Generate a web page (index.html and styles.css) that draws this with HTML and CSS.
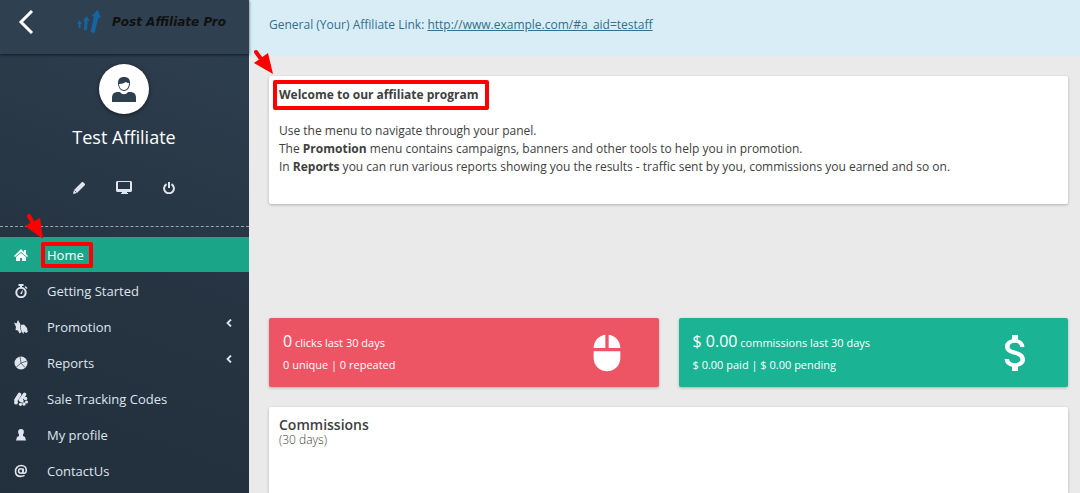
FILE: index.html
```html
<!DOCTYPE html>
<html lang="en">
<head>
    <meta charset="UTF-8">
    <meta name="viewport" content="width=device-width, initial-scale=1.0">
    <title>Post Affiliate Pro</title>
    <link rel="stylesheet" href="styles.css">
</head>
<body>
    <aside class="sidebar">
        <header class="brand">
            <button type="button" class="back" aria-label="Hide menu">
                <svg width="16" height="24" viewBox="0 0 16 24"><path d="M14 1 3 12l11 11" fill="none" stroke="#fff" stroke-width="3"/></svg>
            </button>
            <a href="#" class="logo">
                <svg width="24" height="24" viewBox="0 0 24 24" fill="#1565a5">
                    <path d="M2.500 10l2.500 4H3.500v4h-2v-4H0z"/>
                    <path d="M9.500 6l3 5h-2l-.5 9H7l.5-9H6z"/>
                    <path d="M20.500 0l3.500 8-2.500-.5L17.500 23l-4-1L17 6.500l-2.500-.5z"/>
                </svg>
                <span>Post Affiliate Pro</span>
            </a>
        </header>

        <div class="user">
            <div class="avatar">
                <svg width="24" height="26" viewBox="0 0 24 26">
                    <path d="M0 26v-4c0-4 2-6 6-6h2c2 3 6 3 8 0h2c4 0 6 2 6 6v4z" fill="#2f4050"/>
                    <path d="M12 1c-4 0-6 2-6 6 0 5 3 8 6 8s6-3 6-8c0-4-2-6-6-6z" fill="#2f4050"/>
                    <path d="M7 8c3 0 5-1 7-2 1 1 2 1 3 1 0 4-2 7-5 7s-5-3-5-6z" fill="#fff"/>
                </svg>
            </div>
            <div class="user-name">Test Affiliate</div>
            <div class="user-actions">
                <button type="button" aria-label="Edit profile">
                    <svg width="12" height="12" viewBox="0 0 12 12"><path d="M0 12l1-4 8-8h1l2 2v1l-8 8z"/><path d="M1.500 8.500l2 2" stroke="#2f4050" stroke-width="0.8"/></svg>
                </button>
                <button type="button" aria-label="Desktop view">
                    <svg width="16" height="13" viewBox="0 0 16 13"><path fill-rule="evenodd" d="M1 0h14l1 1v9l-1 1h-4v1h1v1H5v-1h1v-1H1l-1-1V1zM2 1v7h12V1z"/></svg>
                </button>
                <button type="button" aria-label="Log out">
                    <svg width="12" height="12" viewBox="0 0 12 12"><path d="M3.500 2.200a4.900 4.900 0 1 0 5 0" fill="none" stroke="#dfe4ed" stroke-width="2"/><path d="M5 0h2v6H5z"/></svg>
                </button>
            </div>
        </div>

        <nav>
            <ul class="menu">
                <li>
                    <a href="#" class="active">
                        <svg viewBox="0 0 14 14"><path d="M7 1l3 3V2h2v4l2 2-1 1-6-5-6 5-1-1z"/><path d="M7 5l5 4v4H8v-3H6v3H2V9z"/></svg>
                        <span class="marked">Home
                            <svg class="arrow arrow-home" width="18" height="25" viewBox="0 0 18 25"><path d="M4 2l4 7" stroke="#f00" stroke-width="4" stroke-linecap="round"/><path d="M0 12l15-8 3 21z" fill="#f00"/></svg>
                        </span>
                    </a>
                </li>
                <li>
                    <a href="#">
                        <svg viewBox="0 0 14 14"><circle cx="7" cy="8.500" r="4.700" fill="none" stroke="#dfe4ed" stroke-width="2"/><path d="M4.500 0h5v2H8v2H6V2H4.500zM11.500 2l2 2-1 1-2-2zM6 9.500l3-4L8 10z"/></svg>
                        <span>Getting Started</span>
                    </a>
                </li>
                <li>
                    <a href="#">
                        <svg viewBox="0 0 14 14"><path d="M0 2.500l2.500 1L4 0l2.500 4.500L6 8l1.500 4-2 1.500-1.500-3-2.500-.5L2 7z"/><path d="M7 5l3-.5 3 3.500.8 4-1.800 1-2-1.500L9.500 14 8 12 6.500 8z"/></svg>
                        <span>Promotion</span>
                        <svg class="chevron" viewBox="0 0 6 8"><path d="M5 0.500 1.500 4 5 7.500" fill="none" stroke="#dfe4ed" stroke-width="1.800"/></svg>
                    </a>
                </li>
                <li>
                    <a href="#">
                        <svg viewBox="0 0 14 14"><circle cx="7" cy="7" r="6.500"/><path d="M6 0.500 7 7l6-2M7 7l-5 4.500M7 7l4 4.500" fill="none" stroke="#2f4050" stroke-width="0.700"/></svg>
                        <span>Reports</span>
                        <svg class="chevron" viewBox="0 0 6 8"><path d="M5 0.500 1.500 4 5 7.500" fill="none" stroke="#dfe4ed" stroke-width="1.800"/></svg>
                    </a>
                </li>
                <li>
                    <a href="#">
                        <svg viewBox="0 0 14 14"><path d="M5.500 2.500 2 8M10.500 2.500 6.500 8" stroke="#dfe4ed" stroke-width="3.600" stroke-linecap="round"/><circle cx="2" cy="10.500" r="2"/><circle cx="11.500" cy="6.500" r="1.800"/><circle cx="8" cy="9" r="1.700"/><circle cx="12.500" cy="10" r="1.500"/><circle cx="6.500" cy="12.300" r="1.600"/><circle cx="10" cy="12" r="1.700"/></svg>
                        <span>Sale Tracking Codes</span>
                    </a>
                </li>
                <li>
                    <a href="#">
                        <svg viewBox="0 0 14 14"><circle cx="7" cy="4" r="2.900"/><path d="M5 6h4v2l2 1 1 3.500H2L3 9l2-1z"/></svg>
                        <span>My profile</span>
                    </a>
                </li>
                <li>
                    <a href="#">
                        <svg viewBox="0 0 14 14" class="line"><circle cx="6.800" cy="7" r="2.200"/><path d="M9.300 4.500 8.800 8.500c0 1.500 3.500 1 3.500-2 0-3-2-5-5-5C4 1.500 1.500 4 1.500 7.200c0 3 2 5.200 5.200 5.200 1.500 0 2.800-.4 3.800-1"/></svg>
                        <span>ContactUs</span>
                    </a>
                </li>
            </ul>
        </nav>
    </aside>

    <main class="content">
        <div class="notice">General (Your) Affiliate Link: <a href="#">http://www.example.com/#a_aid=testaff</a></div>

        <div class="panels">
            <section class="card welcome">
                <h1><span class="marked">Welcome to our affiliate program
                    <svg class="arrow arrow-welcome" width="19" height="24" viewBox="0 0 19 24"><path d="M2 2l5 7" stroke="#f00" stroke-width="4" stroke-linecap="round"/><path d="M0 13l14-10 5 21z" fill="#f00"/></svg>
                </span></h1>
                <p>Use the menu to navigate through your panel.<br>
                The <b>Promotion</b> menu contains campaigns, banners and other tools to help you in promotion.<br>
                In <b>Reports</b> you can run various reports showing you the results - traffic sent by you, commissions you earned and so on.</p>
            </section>

            <div class="stats">
                <section class="stat clicks">
                    <div>
                        <p><span class="value">0</span> clicks last 30 days</p>
                        <p>0 unique | 0 repeated</p>
                    </div>
                    <svg width="40" height="40" viewBox="0 0 24 24"><path d="M13 1.070V9h7c0-4.080-3.050-7.440-7-7.930zM4 15c0 4.420 3.580 8 8 8s8-3.580 8-8v-4H4v4zm7-13.930C7.050 1.560 4 4.920 4 9h7V1.070z"/></svg>
                </section>
                <section class="stat commissions">
                    <div>
                        <p><span class="value">$ 0.00</span> commissions last 30 days</p>
                        <p>$ 0.00 paid | $ 0.00 pending</p>
                    </div>
                    <svg width="40" height="48" viewBox="2 0 20 24"><path d="M11.800 10.900c-2.270-.59-3-1.200-3-2.150 0-1.090 1.010-1.850 2.700-1.850 1.780 0 2.440.85 2.500 2.100h2.210c-.07-1.720-1.120-3.300-3.210-3.810V3h-3v2.160c-1.940.42-3.500 1.680-3.500 3.610 0 2.310 1.910 3.460 4.700 4.130 2.500.6 3 1.480 3 2.410 0 .69-.49 1.790-2.700 1.790-2.060 0-2.870-.92-2.980-2.100h-2.200c.12 2.190 1.760 3.420 3.680 3.830V21h3v-2.150c1.950-.37 3.500-1.500 3.500-3.550 0-2.840-2.430-3.810-4.700-4.400z"/></svg>
                </section>
            </div>

            <section class="card chart">
                <h2>Commissions</h2>
                <p>(30 days)</p>
            </section>
        </div>
    </main>
</body>
</html>
```
FILE: styles.css
```css
* {
    box-sizing: border-box;
}

body {
    margin: 0;
    display: flex;
    min-height: 100vh;
    font-family: "Open Sans", sans-serif;
    font-size: 12px;
    line-height: 18px;
    color: #404040;
    background-color: #eaeaea;
}

h1, h2, p {
    margin: 0;
}

button {
    padding: 0;
    border: none;
    background: none;
    cursor: pointer;
}

svg {
    display: block;
    flex: none;
}

/* sidebar */
.sidebar {
    flex: none;
    width: 249px;
    background: linear-gradient(200deg, #2f4050, #263442 55%, #22303d);
    color: #fff;
}

.brand {
    position: relative;
    display: flex;
    align-items: center;
    gap: 43px;
    height: 54px;
    padding: 0 18px 10px;
    background-color: #2f4050;
    box-shadow: 0 1px 3px rgba(0, 0, 0, 0.6);
}

.logo {
    display: flex;
    align-items: center;
    gap: 11px;
    color: #111;
    font: italic bold 12px "DejaVu Sans", sans-serif;
    text-decoration: none;
    white-space: nowrap;
}

.user {
    display: flex;
    flex-direction: column;
    align-items: center;
    height: 173px;
    padding: 10px 1px 0 0;
    border-bottom: 1px dashed #9aa4ad;
}

.avatar {
    display: flex;
    justify-content: center;
    align-items: center;
    width: 50px;
    height: 50px;
    border-radius: 50%;
    background-color: #fff;
    box-shadow: 0 1px 4px rgba(0, 0, 0, 0.5);
}

.user-name {
    margin-top: 11px;
    font-size: 18px;
    line-height: 24px;
}

.user-actions {
    display: flex;
    align-items: center;
    gap: 31px;
    margin-top: 32px;
}

.user-actions svg,
.menu svg {
    fill: #dfe4ed;
}

.menu {
    display: grid;
    gap: 1px;
    margin: 0;
    padding: 10px 0 0;
    list-style: none;
}

.menu a {
    display: flex;
    align-items: center;
    gap: 19px;
    height: 35px;
    padding: 0 17px 0 14px;
    color: #dfe4ed;
    font-size: 13px;
    text-decoration: none;
}

.menu a > svg {
    width: 14px;
    height: 14px;
}

.menu a > .chevron {
    width: 6px;
    height: 8px;
    margin: 0 0 8px auto;
}

.menu .line {
    fill: none;
    stroke: #dfe4ed;
    stroke-width: 1.6;
}

.menu .active {
    background-color: #1ba588;
    color: #fff;
}

.menu .active > svg {
    fill: #fff;
}

/* highlighted text with a pointer */
.marked {
    position: relative;
}

.marked::after {
    content: "";
    position: absolute;
    inset: -4px -9px -4px -6px;
    border: 4px solid #f00;
    border-radius: 2px;
}

.welcome .marked::after {
    inset: -6px -10px -7px -6px;
}

.arrow {
    position: absolute;
    z-index: 1;
}

.arrow-home {
    left: -22px;
    top: -32px;
}

.arrow-welcome {
    left: -25px;
    top: -36px;
}

/* content */
.content {
    display: flex;
    flex-direction: column;
    flex: 1;
    min-width: 0;
}

.notice {
    padding: 16px 20px 22px;
    background-color: #d9edf7;
    color: #31708f;
}

.notice a {
    color: inherit;
}

.panels {
    display: flex;
    flex-direction: column;
    flex: 1;
    padding: 20px 12px 0 20px;
}

.card,
.stat {
    border-radius: 2px;
    box-shadow: 0 1px 3px rgba(0, 0, 0, 0.25);
}

.card {
    padding: 10px;
    background-color: #fff;
}

.welcome {
    min-height: 128px;
    margin-bottom: 114px;
}

.welcome h1 {
    margin-bottom: 18px;
    font-size: 12px;
}

.stats {
    display: grid;
    grid-template-columns: 1fr 1fr;
    gap: 20px;
    margin-bottom: 20px;
}

.stat {
    display: flex;
    justify-content: space-between;
    align-items: center;
    min-height: 69px;
    padding: 0 32px 0 14px;
    color: #fff;
    font-size: 11px;
    line-height: 22px;
}

.stat svg {
    fill: #fff;
}

.value {
    font-size: 16px;
}

.clicks {
    background-color: #ed5565;
}

.commissions {
    background-color: #1ab394;
}

.chart {
    flex: 1;
    border-radius: 2px 2px 0 0;
}

.chart h2 {
    font-size: 14px;
    font-weight: 600;
    line-height: 16px;
}

.chart p {
    font-weight: 300;
    line-height: 14px;
}
```
